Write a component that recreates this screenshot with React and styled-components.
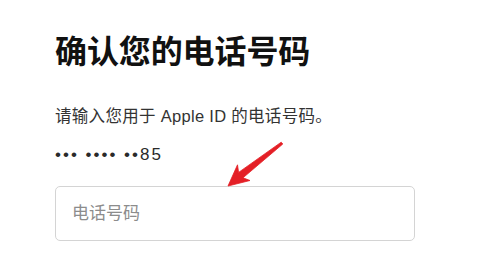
import React from "react";
import styled, { createGlobalStyle } from "styled-components";

const Global = createGlobalStyle`
  html, body { margin: 0; padding: 0; background: #fff; }
  body { width: 477px; height: 256px; overflow: hidden; }
`;

const Page = styled.div`
  position: relative;
  width: 477px;
  height: 256px;
  box-sizing: border-box;
  padding: 33px 62px 0 55px;
  display: flex;
  flex-direction: column;
`;

const Title = styled.h1`
  margin: 0;
  font-family: "Liberation Sans", "Noto Sans CJK SC", sans-serif;
  font-size: 32px;
  line-height: 38px;
  font-weight: 700;
  color: #111;
  letter-spacing: -0.1px;
`;

const Lead = styled.p`
  margin: 34px 0 0;
  font-family: "Liberation Sans", "Noto Sans CJK SC", sans-serif;
  font-size: 16.5px;
  line-height: 22px;
  color: #333;
  letter-spacing: 0.3px;
`;

const Masked = styled.div`
  margin-top: 17px;
  font-family: "Liberation Sans", sans-serif;
  font-size: 17px;
  line-height: 22px;
  color: #2a2a2a;
  letter-spacing: 2px;
`;

const Field = styled.input`
  margin-top: 20px;
  width: 360px;
  height: 55px;
  box-sizing: border-box;
  border: 1px solid #d4d4d4;
  border-radius: 5px;
  padding: 0 16px;
  font-family: "Liberation Sans", "Noto Sans CJK SC", sans-serif;
  font-size: 17px;
  color: #333;
  background: #fff;
  outline: none;
  &::placeholder { color: #8c8c8c; }
`;

const Arrow = styled.svg`
  position: absolute;
  left: 0;
  top: 0;
  pointer-events: none;
`;

export default function App() {
  return (
    <>
      <Global />
      <Page>
        <Title>确认您的电话号码</Title>
        <Lead>请输入您用于 Apple ID 的电话号码。</Lead>
        <Masked>••• •••• ••85</Masked>
        <Field placeholder="电话号码" />
        <Arrow width="477" height="256" viewBox="0 0 477 256">
          <polygon
            points="281.2,142.2 282.8,144 243,177.8 250,180.5 228,186 237.5,164.8 238.6,172.4"
            fill="#e41f26"
            stroke="#e41f26"
            strokeWidth="0.8"
            strokeLinejoin="round"
          />
        </Arrow>
      </Page>
    </>
  );
}
